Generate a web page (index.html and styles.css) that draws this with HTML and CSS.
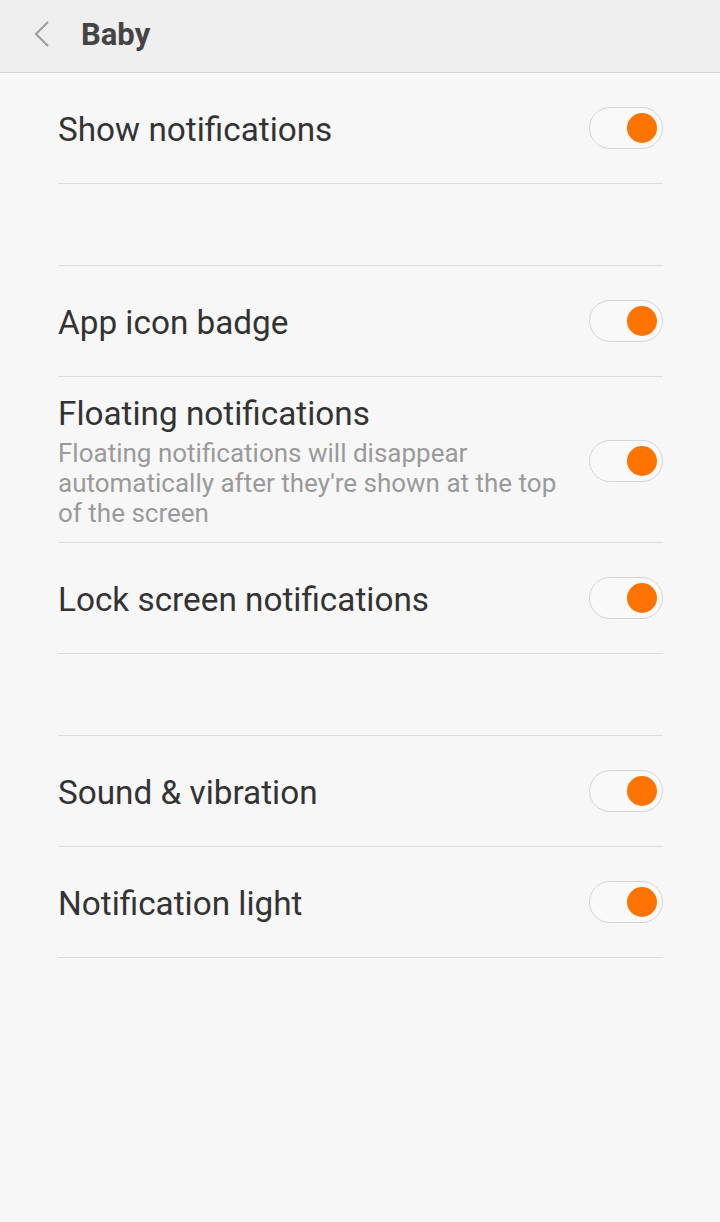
FILE: index.html
```html
<!DOCTYPE html>
<html lang="en">
<head>
  <meta charset="UTF-8" />
  <meta name="viewport" content="width=device-width, initial-scale=1.0"/>
  <title>Baby</title>
  <link rel="stylesheet" href="styles.css">
</head>
<body>

<header>
  <a class="back" href="#">
    <svg width="18" height="28" viewBox="0 0 18 28">
      <polyline points="15,2 3,14 15,26" fill="none" stroke="#a0a0a0" stroke-width="2.2" />
    </svg>
  </a>
  <h1>Baby</h1>
</header>

<main class="settings">
  <section class="group">
    <div class="row">
      <div class="row-text"><span class="title">Show notifications</span></div>
      <span class="switch on"><span class="knob"></span></span>
    </div>
  </section>

  <section class="group">
    <div class="row">
      <div class="row-text"><span class="title">App icon badge</span></div>
      <span class="switch on"><span class="knob"></span></span>
    </div>
    <div class="row tall">
      <div class="row-text">
        <span class="title">Floating notifications</span>
        <p class="summary">Floating notifications will disappear automatically after they're shown at the top of the screen</p>
      </div>
      <span class="switch on"><span class="knob"></span></span>
    </div>
    <div class="row">
      <div class="row-text"><span class="title">Lock screen notifications</span></div>
      <span class="switch on"><span class="knob"></span></span>
    </div>
  </section>

  <section class="group">
    <div class="row">
      <div class="row-text"><span class="title">Sound &amp; vibration</span></div>
      <span class="switch on"><span class="knob"></span></span>
    </div>
    <div class="row">
      <div class="row-text"><span class="title">Notification light</span></div>
      <span class="switch on"><span class="knob"></span></span>
    </div>
  </section>
</main>

</body>
</html>
```

FILE: styles.css
```css
:root {
  --color-texto: #333333;
  --color-gris: #9a9a9a;
  --color-linea: #dcdcdc;
  --color-naranja: #ff7300;
  --color-fondo: #f7f7f7;
}

body {
  font-family: Roboto, "Noto Sans", sans-serif;
  background-color: var(--color-fondo);
  margin: 0;
  padding: 0;
  height: 1222px;
}

header {
  height: 72px;
  background-color: #efefef;
  border-bottom: 1px solid #d2d2d2;
  display: flex;
  align-items: center;
  padding-left: 33px;
}

header .back {
  display: flex;
  width: 48px;
  margin-top: -4px;
}

header h1 {
  margin: 0 0 4px;
  font-size: 31px;
  font-weight: bold;
  color: #444444;
}

.settings {
  margin: 0 57px 0 58px;
}

.group + .group {
  margin-top: 81px;
  border-top: 1px solid var(--color-linea);
}

.row {
  min-height: 110px;
  display: flex;
  align-items: center;
  border-bottom: 1px solid var(--color-linea);
}

.row.tall {
  padding: 17px 0 14px;
}

.row-text {
  flex: 1;
  margin-right: 24px;
}

.title {
  display: block;
  font-size: 33.3px;
  line-height: 40px;
  color: var(--color-texto);
  padding-top: 3px;
}

.tall .title {
  padding-top: 0;
}

.summary {
  margin: 4px 0 0;
  font-size: 26px;
  line-height: 30px;
  color: var(--color-gris);
}

.switch {
  width: 62px;
  height: 40px;
  border: 1px solid #d6d6d6;
  border-radius: 21px;
  background-color: #f9f9f9;
  display: flex;
  align-items: center;
  padding: 0 5px;
  flex-shrink: 0;
}

.switch .knob {
  width: 30px;
  height: 30px;
  border-radius: 50%;
  background-color: var(--color-naranja);
}

.switch.on {
  justify-content: flex-end;
}
```
